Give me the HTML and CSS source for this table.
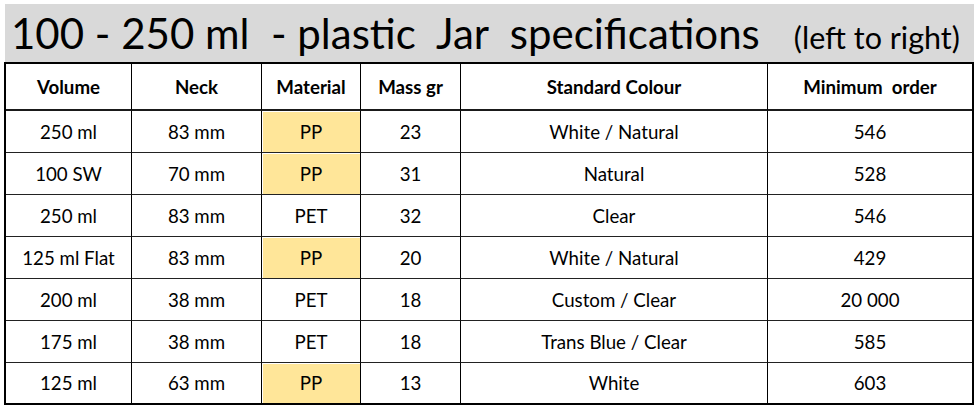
FILE: index.html
```html
<!DOCTYPE html>
<html>
<head>
<meta charset="utf-8">
<link rel="stylesheet" href="styles.css">
</head>
<body>
<div class="sheet">
  <div class="title"><span class="main">100 - 250 ml&nbsp; - plastic&nbsp; Jar&nbsp; specifications</span><span class="sub">(left to right)</span></div>
  <table class="spec">
    <colgroup>
      <col class="c1"><col class="c2"><col class="c3"><col class="c4"><col class="c5"><col class="c6">
    </colgroup>
    <thead>
      <tr><th>Volume</th><th>Neck</th><th>Material</th><th>Mass gr</th><th>Standard Colour</th><th>Minimum&nbsp; order</th></tr>
    </thead>
    <tbody>
      <tr><td>250 ml</td><td>83 mm</td><td class="pp">PP</td><td>23</td><td>White / Natural</td><td>546</td></tr>
      <tr><td>100 SW</td><td>70 mm</td><td class="pp">PP</td><td>31</td><td>Natural</td><td>528</td></tr>
      <tr><td>250 ml</td><td>83 mm</td><td>PET</td><td>32</td><td>Clear</td><td>546</td></tr>
      <tr><td>125 ml Flat</td><td>83 mm</td><td class="pp">PP</td><td>20</td><td>White / Natural</td><td>429</td></tr>
      <tr><td>200 ml</td><td>38 mm</td><td>PET</td><td>18</td><td>Custom / Clear</td><td>20 000</td></tr>
      <tr><td>175 ml</td><td>38 mm</td><td>PET</td><td>18</td><td>Trans Blue / Clear</td><td>585</td></tr>
      <tr class="last"><td>125 ml</td><td>63 mm</td><td class="pp">PP</td><td>13</td><td>White</td><td>603</td></tr>
    </tbody>
  </table>
</div>
</body>
</html>
```
FILE: styles.css
```css
html, body {
  margin: 0;
  padding: 0;
  background: #fff;
}
.sheet {
  padding: 4px 0 0 4px;
  width: 970px;
  font-family: Lato, "Open Sans", sans-serif;
  color: #000;
}
.title {
  background: #d9d9d9;
  height: 58px;
  margin-left: 1px;
  width: 969px;
  display: flex;
  align-items: baseline;
  box-sizing: border-box;
  padding: 7px 0 0 6px;
}
.title .main {
  font-size: 42px;
  line-height: 44px;
  white-space: pre;
}
.title .sub {
  font-size: 30.5px;
  margin-left: 34px;
  white-space: pre;
}
.spec {
  border-collapse: separate;
  border-spacing: 0;
  table-layout: fixed;
  width: 970px;
  border: 2px solid #000;
  font-size: 18.7px;
}
.c1 { width: 126px; }
.c2 { width: 130px; }
.c3 { width: 99px; }
.c4 { width: 100px; }
.c5 { width: 307px; }
.c6 { width: 204px; }
.spec th, .spec td {
  padding: 0;
  text-align: center;
  border-right: 1px solid #000;
  white-space: nowrap;
}
.spec th:last-child, .spec td:last-child {
  border-right: none;
}
.spec th {
  height: 45px;
  font-weight: 700;
  border-bottom: 2px solid #1a1a1a;
}
.spec td {
  height: 41px;
  border-bottom: 1px solid #222;
}
.spec tr.last td {
  border-bottom: none;
  height: 40px;
}
.spec td.pp {
  background: #ffe699;
  box-shadow: inset 1px 1px 0 #fff;
}
```
